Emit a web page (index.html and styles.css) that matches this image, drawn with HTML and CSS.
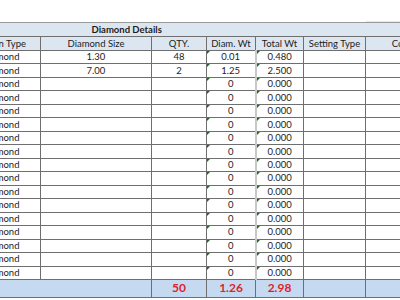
FILE: index.html
```html
<!DOCTYPE html>
<html>
<head>
<meta charset="utf-8">
<link rel="stylesheet" href="styles.css">
</head>
<body>
<div class="sheet">
  <div class="topline"></div>
  <table class="grid">
    <colgroup>
      <col class="c-a"><col class="c-b"><col class="c-c"><col class="c-d"><col class="c-e"><col class="c-f"><col class="c-g">
    </colgroup>
    <thead>
      <tr class="title-row"><th colspan="7" class="title">Diamond Details</th></tr>
      <tr class="head-row">
        <th>Design Type</th><th>Diamond Size</th><th>QTY.</th><th>Diam. Wt</th><th class="tw">Total Wt</th><th>Setting Type</th><th>Color</th>
      </tr>
    </thead>
    <tbody>
      <tr><td>Diamond</td><td>1.30</td><td>48</td><td class="mk">0.01</td><td class="mk tw">0.480</td><td></td><td></td></tr>
      <tr><td>Diamond</td><td>7.00</td><td>2</td><td class="mk">1.25</td><td class="mk tw">2.500</td><td></td><td></td></tr>
      <tr><td>Diamond</td><td></td><td></td><td class="mk">0</td><td class="mk tw">0.000</td><td></td><td></td></tr>
      <tr><td>Diamond</td><td></td><td></td><td class="mk">0</td><td class="mk tw">0.000</td><td></td><td></td></tr>
      <tr><td>Diamond</td><td></td><td></td><td class="mk">0</td><td class="mk tw">0.000</td><td></td><td></td></tr>
      <tr><td>Diamond</td><td></td><td></td><td class="mk">0</td><td class="mk tw">0.000</td><td></td><td></td></tr>
      <tr><td>Diamond</td><td></td><td></td><td class="mk">0</td><td class="mk tw">0.000</td><td></td><td></td></tr>
      <tr><td>Diamond</td><td></td><td></td><td class="mk">0</td><td class="mk tw">0.000</td><td></td><td></td></tr>
      <tr><td>Diamond</td><td></td><td></td><td class="mk">0</td><td class="mk tw">0.000</td><td></td><td></td></tr>
      <tr><td>Diamond</td><td></td><td></td><td class="mk">0</td><td class="mk tw">0.000</td><td></td><td></td></tr>
      <tr><td>Diamond</td><td></td><td></td><td class="mk">0</td><td class="mk tw">0.000</td><td></td><td></td></tr>
      <tr><td>Diamond</td><td></td><td></td><td class="mk">0</td><td class="mk tw">0.000</td><td></td><td></td></tr>
      <tr><td>Diamond</td><td></td><td></td><td class="mk">0</td><td class="mk tw">0.000</td><td></td><td></td></tr>
      <tr><td>Diamond</td><td></td><td></td><td class="mk">0</td><td class="mk tw">0.000</td><td></td><td></td></tr>
      <tr><td>Diamond</td><td></td><td></td><td class="mk">0</td><td class="mk tw">0.000</td><td></td><td></td></tr>
      <tr><td>Diamond</td><td></td><td></td><td class="mk">0</td><td class="mk tw">0.000</td><td></td><td></td></tr>
      <tr><td>Diamond</td><td></td><td></td><td class="mk">0</td><td class="mk tw">0.000</td><td></td><td></td></tr>
    </tbody>
    <tfoot>
      <tr class="total-row"><td></td><td></td><td>50</td><td>1.26</td><td class="tw">2.98</td><td></td><td></td></tr>
    </tfoot>
  </table>
</div>
</body>
</html>
```
FILE: styles.css
```css
html, body {
  margin: 0;
  padding: 0;
  background: #ffffff;
  overflow: hidden;
  width: 400px;
  height: 300px;
}
.sheet {
  padding-top: 22px;
  position: relative;
  font-family: Lato, "Liberation Sans", sans-serif;
  font-size: 9.5px;
  color: #1c1c1c;
}
.topline {
  position: absolute;
  left: 366px;
  top: 21px;
  width: 34px;
  height: 1px;
  background: #f1ecb4;
}
.grid {
  border-collapse: collapse;
  table-layout: fixed;
  margin-left: -40px;
  width: 480px;
}
.c-a { width: 80px; }
.c-b { width: 111px; }
.c-c { width: 55px; }
.c-d { width: 49px; }
.c-e { width: 48px; }
.c-f { width: 62px; }
.c-g { width: 75px; }

.grid th, .grid td {
  border: 1px solid #6f6f6f;
  padding: 0;
  text-align: center;
  white-space: nowrap;
  overflow: hidden;
  font-weight: normal;
  line-height: 12px;
}
.title-row th {
  height: 13px;
  background: #dce6f1;
  font-weight: bold;
  text-align: left;
  padding-left: 131px;
  border-top: 1px solid #9a9a9a;
  border-left: none;
  border-right: none;
}
.head-row th {
  height: 13px;
  background: #dce6f1;
}
tbody td {
  height: 12.47px;
  border-top-color: #8a8a8a;
  border-bottom-color: #8a8a8a;
}
tbody td.tw {
  border-left: 2px solid #c8c8c8;
}
.mk {
  position: relative;
}
.mk::before {
  content: "";
  position: absolute;
  left: 0;
  top: 0;
  width: 0;
  height: 0;
  border-top: 3px solid #1f6a22;
  border-right: 3px solid transparent;
}
.total-row td {
  height: 17px;
  background: #c5d9f1;
  color: #e01f2a;
  font-weight: bold;
  font-size: 12px;
  line-height: 16px;
  border-bottom: 1px solid #6f6f6f;
}
.total-row td:first-child,
.total-row td:nth-child(2) {
  border-right: none;
  border-left: none;
}
```
